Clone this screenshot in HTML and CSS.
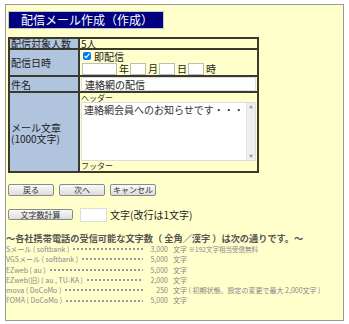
FILE: index.html
```html
<!DOCTYPE html>
<html lang="ja">

<head>
    <meta charset="UTF-8">
    <title>配信メール作成</title>
    <link rel="stylesheet" href="styles.css">
</head>

<body>
    <div class="panel">
        <div class="page-title">配信メール作成（作成）</div>

        <table class="form-table">
            <tr class="row-count">
                <th>配信対象人数</th>
                <td>5人</td>
            </tr>
            <tr class="row-date">
                <th>配信日時</th>
                <td>
                    <label class="check"><input type="checkbox" checked>即配信</label>
                    <div class="date-fields">
                        <input type="text" class="date-box date-year"><span>年</span>
                        <input type="text" class="date-box date-small"><span>月</span>
                        <input type="text" class="date-box date-small"><span>日</span>
                        <input type="text" class="date-box date-small"><span>時</span>
                    </div>
                </td>
            </tr>
            <tr class="row-subject">
                <th>件名</th>
                <td><input type="text" class="subject" value="連絡網の配信"></td>
            </tr>
            <tr class="row-body">
                <th><div>メール文章</div><div>(1000文字)</div></th>
                <td>
                    <div class="fixed-text">ヘッダー</div>
                    <div class="body-box">
                        <textarea class="body-text">連絡網会員へのお知らせです・・・</textarea>
                        <div class="fake-scroll"><span>▲</span><span>▼</span></div>
                    </div>
                    <div class="fixed-text">フッター</div>
                </td>
            </tr>
        </table>

        <div class="button-row">
            <button type="button" class="btn">戻る</button>
            <button type="button" class="btn">次へ</button>
            <button type="button" class="btn">キャンセル</button>
        </div>

        <div class="count-row">
            <button type="button" class="btn btn-count">文字数計算</button>
            <input type="text" class="count-input">
            <span>文字(改行は1文字)</span>
        </div>

        <div class="limits">
            <div class="limits-title">～各社携帯電話の受信可能な文字数（ 全角／漢字 ）は次の通りです。～</div>
            <div class="limit-row">
                <span class="carrier">Sメール ( softbank )</span><span class="leader"></span>
                <span class="num">3,000</span>
                <span class="unit">文字 <small>※192文字相当受信無料</small></span>
            </div>
            <div class="limit-row">
                <span class="carrier">VGSメール ( softbank )</span><span class="leader"></span>
                <span class="num">5,000</span>
                <span class="unit">文字</span>
            </div>
            <div class="limit-row">
                <span class="carrier">EZweb ( au )</span><span class="leader"></span>
                <span class="num">5,000</span>
                <span class="unit">文字</span>
            </div>
            <div class="limit-row">
                <span class="carrier">EZweb(旧) ( au , TU-KA )</span><span class="leader"></span>
                <span class="num">2,000</span>
                <span class="unit">文字</span>
            </div>
            <div class="limit-row">
                <span class="carrier">mova ( DoCoMo )</span><span class="leader"></span>
                <span class="num">250</span>
                <span class="unit">文字 ( 初期状態。設定の変更で最大 2,000文字 )</span>
            </div>
            <div class="limit-row">
                <span class="carrier">FOMA ( DoCoMo )</span><span class="leader"></span>
                <span class="num">5,000</span>
                <span class="unit">文字</span>
            </div>
        </div>
    </div>
</body>

</html>
```

FILE: styles.css
```css
body {
    margin: 0;
    font-family: "Noto Sans CJK JP", sans-serif;
    background-color: #fff;
    color: #222;
}

.panel {
    margin: 4px 0 0 5px;
    width: 337px;
    height: 315px;
    border: 1px solid #999;
    background-color: #ffffcc;
    overflow: hidden;
}

.page-title {
    margin: 7px 0 0 3px;
    width: 142px;
    height: 16px;
    padding-left: 12px;
    background-color: #000080;
    box-shadow: 0 0 0 1px #c8c8c8;
    color: #fff;
    font-size: 12px;
    line-height: 16px;
    white-space: nowrap;
}

.form-table {
    margin: 9px 0 0 2px;
    width: 251px;
    border-collapse: collapse;
    border: 2px solid #3a3a2c;
    font-size: 10px;
    line-height: 9px;
}

.form-table th,
.form-table td {
    border: 2px solid #3a3a2c;
    padding: 0 1px;
    vertical-align: middle;
}

.form-table th {
    width: 66px;
    background-color: #b0c4de;
    font-weight: normal;
    text-align: left;
    white-space: nowrap;
}

.form-table .row-body th {
    line-height: 14px;
}

.form-table .row-body th div {
    height: 11px;
    overflow: visible;
}

.form-table td {
    background-color: #ffffcc;
}

.row-count td,
.row-count th {
    height: 8px;
}

.check {
    display: flex;
    align-items: center;
    height: 12px;
}

.check input {
    width: 8px;
    height: 8px;
    margin: 0 3px 0 2px;
}

.date-fields {
    display: flex;
    align-items: center;
    height: 13px;
}

.date-box {
    flex-shrink: 0;
    height: 12px;
    box-sizing: border-box;
    border: 1px solid #bdbdbd;
    background-color: #fff;
    padding: 0;
    margin: 0 2px 0 1px;
}

.date-year {
    width: 35px;
}

.date-small {
    width: 16px;
}

.subject {
    display: block;
    width: 100%;
    height: 14px;
    box-sizing: border-box;
    margin: 0;
    border: 1px solid #ddd;
    background-color: #fff;
    padding: 0 3px;
    font-family: inherit;
    font-size: 10px;
    color: #222;
}

.fixed-text {
    font-size: 8px;
    line-height: 9px;
    color: #333;
}

.body-box {
    display: flex;
    height: 57px;
    border: 1px solid #ddd;
    background-color: #fff;
}

.body-text {
    flex-grow: 1;
    width: 100%;
    min-width: 0;
    border: none;
    resize: none;
    overflow: hidden;
    padding: 1px 2px;
    font-family: inherit;
    font-size: 10px;
    line-height: 11px;
    color: #333;
}

.fake-scroll {
    flex-shrink: 0;
    width: 8px;
    display: flex;
    flex-direction: column;
    justify-content: space-between;
    background-color: #efefef;
    border-left: 1px solid #e4e4e4;
    color: #999;
    font-size: 4px;
    line-height: 8px;
    text-align: center;
}

.row-body td {
    padding-top: 0;
    padding-bottom: 1px;
}

.button-row {
    display: flex;
    gap: 5px;
    margin: 11px 0 0 2px;
}

.btn {
    width: 46px;
    height: 12px;
    padding: 0;
    border: 1px solid #8a8a8a;
    border-radius: 2px;
    background: linear-gradient(#fafafa, #dcdcdc);
    font-family: inherit;
    font-size: 8px;
    line-height: 10px;
    color: #333;
    cursor: pointer;
}

.count-row {
    display: flex;
    align-items: center;
    margin: 11px 0 0 2px;
    font-size: 10px;
}

.btn-count {
    width: 65px;
    height: 11px;
}

.count-input {
    width: 27px;
    height: 14px;
    box-sizing: border-box;
    margin: 0 3px 0 7px;
    padding: 0;
    border: 1px solid #ddd;
    background-color: #fff;
}

.limits {
    margin-top: 10px;
}

.limits-title {
    font-size: 9.2px;
    line-height: 12px;
    font-weight: bold;
    color: #555;
    white-space: nowrap;
}

.limit-row {
    display: flex;
    width: 300px;
    font-size: 7px;
    line-height: 10.3px;
    color: #888;
    white-space: nowrap;
}

.carrier {
    flex-shrink: 0;
}

/* dotted leader between name and count */
.leader {
    flex: 1 1 auto;
    max-width: 140px;
    margin-left: 3px;
    background-image: radial-gradient(circle, #999 0.8px, transparent 1px);
    background-size: 4px 4px;
    background-repeat: repeat-x;
    background-position: 0 center;
}

.num {
    width: 25px;
    text-align: right;
    margin-left: auto;
}

.unit {
    margin-left: 5px;
    width: 133px;
}

.unit small {
    font-size: 6.5px;
}
```
